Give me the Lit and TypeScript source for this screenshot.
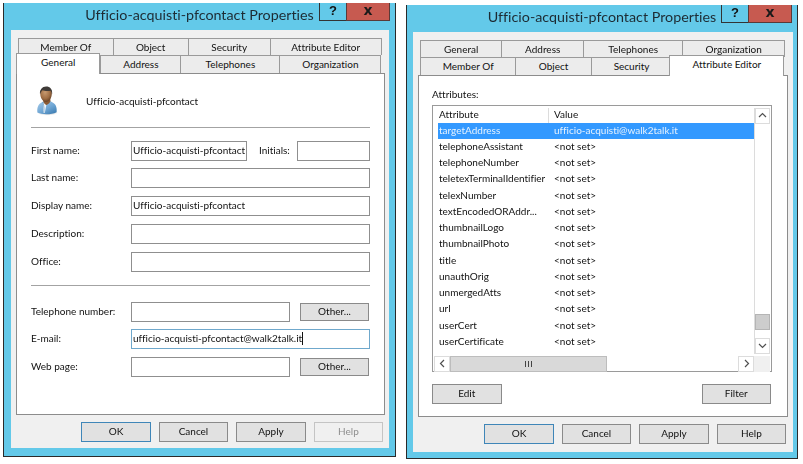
import { LitElement, html, css, svg } from "lit";
import { customElement } from "lit/decorators.js";

type Tab = { label: string; w: number; on?: boolean };

const personIcon = svg`
<svg class="person" width="22" height="30" viewBox="0 0 24 31" preserveAspectRatio="none">
  <defs>
    <radialGradient id="skin" cx="0.42" cy="0.35" r="0.7">
      <stop offset="0" stop-color="#c79a70"/><stop offset="0.6" stop-color="#a06e44"/><stop offset="1" stop-color="#5d3a20"/>
    </radialGradient>
    <linearGradient id="shirt" x1="0" y1="0" x2="0.8" y2="1">
      <stop offset="0" stop-color="#a9cdea"/><stop offset="0.6" stop-color="#6fa6d4"/><stop offset="1" stop-color="#3f7fb4"/>
    </linearGradient>
    <radialGradient id="shade" cx="0.5" cy="0.5" r="0.5">
      <stop offset="0" stop-color="#777" stop-opacity="0.5"/><stop offset="1" stop-color="#777" stop-opacity="0"/>
    </radialGradient>
  </defs>
  <ellipse cx="12.5" cy="27.5" rx="11.5" ry="3.2" fill="url(#shade)"/>
  <path d="M1.5 27.5 C1 22 2.5 18.5 6 17 L9 15.5 L15.5 15.5 L19 17.5 C22 19 23 23 22.5 27 C17 29.6 7 29.8 1.5 27.5Z" fill="url(#shirt)"/>
  <path d="M8.6 16.5 L11.3 19.5 L9.6 27.8 L8 28 L7.6 18Z" fill="#eef5fb"/>
  <path d="M7.5 16.5 C9 21 8.8 25 8.6 28" stroke="#4a82b0" stroke-width="0.6" fill="none"/>
  <path d="M7.8 15 C8 17.5 10 19.5 11.4 19.6 C13.5 18.4 15.6 17 15.8 15.4 L15.4 12 L8.4 12Z" fill="#8a5a34"/>
  <path d="M4.6 7.4 C4.6 3.4 7.6 1 11 1 C14.8 1 17.4 3.6 17.3 7.6 C17.2 12.6 14.2 16.6 11 16.6 C7.8 16.6 4.6 12.4 4.6 7.4Z" fill="url(#skin)"/>
  <path d="M4.4 8.6 C3.6 3.8 7 0.4 11 0.4 C15 0.3 18.2 3 17.6 8.4 C17 7 16.8 5.8 15.8 4.8 C13 5.6 8.6 5 7 4.4 C5.8 5.4 5 6.8 4.4 8.6Z" fill="#3f3b38"/>
</svg>`;

const rows: [string, string][] = [
  ["telephoneAssistant", "<not set>"],
  ["telephoneNumber", "<not set>"],
  ["teletexTerminalIdentifier", "<not set>"],
  ["telexNumber", "<not set>"],
  ["textEncodedORAddr...", "<not set>"],
  ["thumbnailLogo", "<not set>"],
  ["thumbnailPhoto", "<not set>"],
  ["title", "<not set>"],
  ["unauthOrig", "<not set>"],
  ["unmergedAtts", "<not set>"],
  ["url", "<not set>"],
  ["userCert", "<not set>"],
  ["userCertificate", "<not set>"],
];

const chevron = (d: string) => svg`<svg width="9" height="9" viewBox="0 0 9 9"><path d="${d}" fill="none" stroke="#505050" stroke-width="1.2"/></svg>`;

@customElement("app-root")
export class AppRoot extends LitElement {
  static styles = css`
    :host {
      display: flex;
      align-items: flex-start;
      gap: 10px;
      width: 803px;
      height: 464px;
      padding-left: 3px;
      box-sizing: border-box;
      background: #fff;
      overflow: hidden;
      font-family: Lato, "Noto Sans", sans-serif;
      font-size: 10px;
      font-variant-ligatures: none;
      color: #111;
    }
    * { box-sizing: border-box; }
    .win {
      display: flex;
      flex-direction: column;
      background: #63c9e9;
      border: 1px solid #2a2a2a;
      border-top: none;
      flex: none;
      filter: blur(0.3px);
    }
    .win.a { width: 393px; height: 454px; margin-top: 3px; }
    .win.b { width: 392px; height: 454px; margin-top: 5px; }
    .caption { display: grid; height: 27px; flex: none; }
    .caption > * { grid-area: 1 / 1; }
    .title {
      justify-self: center;
      font-size: 14.3px;
      line-height: 23px;
      color: #1d2b33;
    }
    .ctl { display: flex; justify-self: end; align-self: start; height: 18px; margin-right: 5px; }
    .q {
      width: 27px;
      border: 1px solid #333;
      border-top: none;
      border-right: none;
      text-align: center;
      font: bold 13px/15px "Liberation Sans", sans-serif;
      color: #111;
    }
    .x {
      width: 44px;
      background: #c75a50;
      border: 1px solid #5a3a38;
      border-top: none;
      text-align: center;
      font: bold 14px/14px "DejaVu Sans", sans-serif;
      color: #1a1a1a;
    }
    .panel {
      margin-left: 7px;
      width: 378px;
      height: 418px;
      background: #f0f0f0;
      padding: 8px 5px 0;
      display: flex;
      flex-direction: column;
    }
    .b .panel { margin-left: 6px; width: 380px; padding: 8px 6px 0 5px; height: 420px; }
    .strip { display: flex; padding-left: 2px; height: 17px; flex: none; }
    .tab {
      flex: none;
      background: #ececec;
      border: 1px solid #9a9a9a;
      border-bottom: none;
      margin-right: -1px;
      text-align: center;
      line-height: 16px;
      white-space: nowrap;
    }
    .strip.front { height: 18px; position: relative; z-index: 1; }
    .tab.on {
      background: #fff;
      margin: -2px 0 -1px -2px;
      height: 21px;
      line-height: 17px;
      position: relative;
      z-index: 2;
    }
    .page {
      height: 342px;
      flex: none;
      background: #fff;
      border: 1px solid #8c8c8c;
      display: flex;
      flex-direction: column;
      margin-right: -1px;
      margin-top: -0.5px;
    }
    .foot {
      display: flex;
      justify-content: flex-end;
      gap: 8px;
      margin-top: 7px;
      margin-right: 0.8px;
    }
    .btn {
      flex: none;
      width: 69.5px;
      height: 20px;
      background: #e1e1e1;
      border: 1px solid #8a8a8a;
      text-align: center;
      line-height: 17px;
    }
    .btn.def { border-color: #3f86b8; }
    .btn.off { background: #f0f0f0; border-color: #c4c4c4; color: #8f8f8f; }
    .form { padding: 0 14px; display: flex; flex-direction: column; }
    .who { display: flex; align-items: center; height: 31px; margin-top: 12px; padding-left: 5px; }
    .person { flex: none; margin-right: 28px; }
    .sep { height: 1px; background: #a3a3a3; flex: none; }
    .who + .sep { margin-top: 10px; }
    .fields { display: flex; flex-direction: column; gap: 7.75px; margin-top: 13px; }
    .fields.two { gap: 7.5px; margin-top: 16px; }
    .sep.mid { margin-top: 13px; }
    .row { display: flex; align-items: center; height: 20px; }
    .lab { flex: none; width: 100px; margin-top: -2px; }
    .inp {
      height: 20px;
      border: 1px solid #8f8f8f;
      background: #fff;
      padding-left: 1px;
      line-height: 16px;
      white-space: nowrap;
      overflow: hidden;
      flex: none;
    }
    .full { width: 239px; }
    .mid160 { width: 159px; }
    .first { width: 116px; }
    .init { width: 73px; margin-left: auto; }
    .ilab { margin-left: 12px; margin-top: -2px; }
    .inp.focus { border-color: #6fa8cc; }
    .caret { display: inline-block; width: 1px; height: 13px; background: #111; vertical-align: -3px; }
    .other { width: 69px; height: 18px; margin-left: 10px; line-height: 15px; }
    .attr { padding: 0 13px; display: flex; flex-direction: column; }
    .attr-lab { height: 14px; margin-top: 11px; line-height: 14px; }
    .list {
      width: 340px;
      height: 267px;
      margin-top: 4px;
      border: 1px solid #9a9a9a;
      padding: 2px 1px;
      display: flex;
      flex-direction: column;
    }
    .top { display: flex; height: 246px; flex: none; }
    .grid { width: 320px; flex: none; display: flex; flex-direction: column; overflow: hidden; }
    .head { display: flex; height: 15px; line-height: 13px; flex: none; }
    .head span:first-child { width: 115px; padding-left: 5px; border-right: 1px solid #dcdcdc; }
    .head span:last-child { padding-left: 5px; }
    .li { display: flex; height: 16.27px; line-height: 14px; flex: none; padding-left: 5px; }
    .li span:first-child { width: 115px; flex: none; white-space: nowrap; overflow: hidden; }
    .li.sel { background: #3399ff; color: #e6f2ff; margin-left: 4px; padding-left: 1px; }
    .vbar {
      width: 16px;
      flex: none;
      display: flex;
      flex-direction: column;
      border-left: 1px solid #dcdcdc;
      align-items: stretch;
    }
    .arrow { height: 16px; flex: none; display: flex; align-items: center; justify-content: center; border: 1px solid #dcdcdc; }
    .vthumb { height: 16px; background: #cdcdcd; border: 1px solid #b5b5b5; margin-top: 190px; flex: none; }
    .vgap { flex: 1; }
    .hrow { display: flex; height: 16px; flex: none; margin-top: 2px; }
    .harrow { width: 16px; flex: none; display: flex; align-items: center; justify-content: center; border: 1px solid #dcdcdc; }
    .hthumb { width: 157px; flex: none; background: #d9d9d9; border: 1px solid #bdbdbd; display: flex; align-items: center; justify-content: center; gap: 1px; }
    .hthumb i { width: 1px; height: 6px; background: #444; margin-right: 1px; }
    .htrack { flex: 1; }
    .corner { width: 16px; flex: none; background: #f0f0f0; }
    .acts { display: flex; justify-content: space-between; margin-top: 12px; width: 339px; }
  `;

  private strip(tabs: Tab[], front = false) {
    return html`<div class="strip ${front ? "front" : ""}">
      ${tabs.map(
        (t) => html`<div class="tab ${t.on ? "on" : ""}" style="width:${t.w}px">${t.label}</div>`
      )}
    </div>`;
  }

  private foot(helpOff: boolean) {
    return html`<div class="foot">
      <div class="btn def">OK</div>
      <div class="btn">Cancel</div>
      <div class="btn">Apply</div>
      <div class="btn ${helpOff ? "off" : ""}">Help</div>
    </div>`;
  }

  private caption() {
    return html`<div class="caption">
      <div class="title">Ufficio-acquisti-pfcontact Properties</div>
      <div class="ctl"><div class="q">?</div><div class="x">x</div></div>
    </div>`;
  }

  private general() {
    return html`<div class="page form">
      <div class="who">${personIcon}<span>Ufficio-acquisti-pfcontact</span></div>
      <div class="sep"></div>
      <div class="fields">
        <div class="row">
          <span class="lab">First name:</span>
          <div class="inp first">Ufficio-acquisti-pfcontact</div>
          <span class="ilab">Initials:</span>
          <div class="inp init"></div>
        </div>
        <div class="row"><span class="lab">Last name:</span><div class="inp full"></div></div>
        <div class="row"><span class="lab">Display name:</span><div class="inp full">Ufficio-acquisti-pfcontact</div></div>
        <div class="row"><span class="lab">Description:</span><div class="inp full"></div></div>
        <div class="row"><span class="lab">Office:</span><div class="inp full"></div></div>
      </div>
      <div class="sep mid"></div>
      <div class="fields two">
        <div class="row"><span class="lab">Telephone number:</span><div class="inp mid160"></div><div class="btn other">Other...</div></div>
        <div class="row"><span class="lab">E-mail:</span><div class="inp full focus">ufficio-acquisti-pfcontact@walk2talk.it<span class="caret"></span></div></div>
        <div class="row"><span class="lab">Web page:</span><div class="inp mid160"></div><div class="btn other">Other...</div></div>
      </div>
    </div>`;
  }

  private attributes() {
    return html`<div class="page attr">
      <div class="attr-lab">Attributes:</div>
      <div class="list">
        <div class="top">
          <div class="grid">
            <div class="head"><span>Attribute</span><span>Value</span></div>
            <div class="li sel"><span>targetAddress</span><span>ufficio-acquisti@walk2talk.it</span></div>
            ${rows.map(([a, v]) => html`<div class="li"><span>${a}</span><span>${v}</span></div>`)}
          </div>
          <div class="vbar">
            <div class="arrow">${chevron("M1 6 L4.5 2.5 L8 6")}</div>
            <div class="vthumb"></div>
            <div class="vgap"></div>
            <div class="arrow">${chevron("M1 3 L4.5 6.5 L8 3")}</div>
          </div>
        </div>
        <div class="hrow">
          <div class="harrow">${chevron("M6 1 L2.5 4.5 L6 8")}</div>
          <div class="hthumb"><i></i><i></i><i></i></div>
          <div class="htrack"></div>
          <div class="harrow">${chevron("M3 1 L6.5 4.5 L3 8")}</div>
          <div class="corner"></div>
        </div>
      </div>
      <div class="acts"><div class="btn">Edit</div><div class="btn">Filter</div></div>
    </div>`;
  }

  render() {
    return html`
      <div class="win a">
        ${this.caption()}
        <div class="panel">
          ${this.strip([
            { label: "Member Of", w: 95.7 },
            { label: "Object", w: 76 },
            { label: "Security", w: 83 },
            { label: "Attribute Editor", w: 112 },
          ])}
          ${this.strip(
            [
              { label: "General", w: 84.4, on: true },
              { label: "Address", w: 81 },
              { label: "Telephones", w: 100 },
              { label: "Organization", w: 102 },
            ],
            true
          )}
          ${this.general()}
          ${this.foot(true)}
        </div>
      </div>
      <div class="win b">
        ${this.caption()}
        <div class="panel">
          ${this.strip([
            { label: "General", w: 82.4 },
            { label: "Address", w: 82.6 },
            { label: "Telephones", w: 100.4 },
            { label: "Organization", w: 102.6 },
          ])}
          ${this.strip(
            [
              { label: "Member Of", w: 96.4 },
              { label: "Object", w: 76.3 },
              { label: "Security", w: 81.7 },
              { label: "Attribute Editor", w: 115, on: true },
            ],
            true
          )}
          ${this.attributes()}
          ${this.foot(false)}
        </div>
      </div>
    `;
  }
}
